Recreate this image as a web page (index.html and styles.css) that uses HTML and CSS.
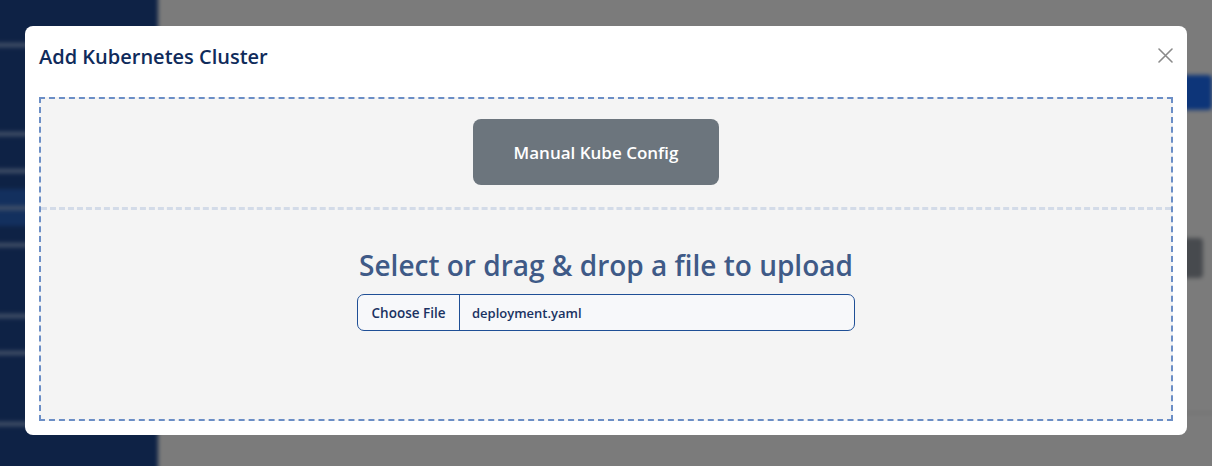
FILE: index.html
```html
<!DOCTYPE html>
<html lang="en">
<head>
<meta charset="utf-8">
<title>Add Kubernetes Cluster</title>
<link rel="stylesheet" href="styles.css">
</head>
<body>
<div class="app">
  <aside class="sidebar">
    <div class="side-logo"><span class="bar"></span></div>
    <div class="side-group">
      <div class="side-item"><span class="bar"></span></div>
      <div class="side-item"><span class="bar"></span></div>
      <div class="side-item active"><span class="bar"></span></div>
      <div class="side-item"><span class="bar"></span></div>
    </div>
    <div class="side-group">
      <div class="side-item"><span class="bar"></span></div>
      <div class="side-item"><span class="bar"></span></div>
    </div>
    <div class="side-group">
      <div class="side-item"><span class="bar"></span></div>
    </div>
  </aside>
  <main class="main">
    <div class="main-top"></div>
    <div class="main-row">
      <span class="btn-blue"></span>
    </div>
    <div class="main-row row2">
      <span class="btn-dark"></span>
    </div>
    <div class="main-line"></div>
  </main>
</div>

<div class="overlay">
  <div class="modal">
    <div class="modal-header">
      <h2 class="modal-title">Add Kubernetes Cluster</h2>
      <button class="close-btn" aria-label="Close">
        <svg width="15" height="15" viewBox="0 0 15 15">
          <path d="M1 1 L14 14 M14 1 L1 14" stroke="#8a8a8a" stroke-width="1.6" fill="none" stroke-linecap="round"/>
        </svg>
      </button>
    </div>
    <div class="dropzone">
      <div class="zone-top">
        <button class="btn-manual">Manual Kube Config</button>
      </div>
      <div class="zone-bottom">
        <h3 class="upload-title">Select or drag &amp; drop a file to upload</h3>
        <div class="file-input">
          <span class="file-choose">Choose File</span>
          <span class="file-name">deployment.yaml</span>
        </div>
      </div>
    </div>
  </div>
</div>
</body>
</html>
```

FILE: styles.css
```css
* { box-sizing: border-box; }

html, body {
  margin: 0;
  padding: 0;
  width: 1212px;
  height: 466px;
  overflow: hidden;
  background: #7b7b7b;
  font-family: "Open Sans", "Noto Sans", sans-serif;
}

.app {
  display: flex;
  width: 1232px;
  height: 486px;
  margin: -10px;
  filter: blur(2px);
}

.sidebar {
  width: 168px;
  flex: none;
  background: #0e2245;
  display: flex;
  flex-direction: column;
  padding-top: 38px;
}

.side-logo {
  height: 38px;
  display: flex;
  align-items: center;
  margin-bottom: 54px;
}

.side-group {
  display: flex;
  flex-direction: column;
  margin-bottom: 34px;
}

.side-item {
  height: 37px;
  display: flex;
  align-items: center;
}

.side-item.active {
  background: #13305e;
}

.bar {
  display: block;
  width: 100px;
  height: 4px;
  border-radius: 2px;
  background: #46536a;
}

.main {
  flex: 1;
  background: #7b7b7b;
  display: flex;
  flex-direction: column;
}

.main-top {
  height: 85px;
}

.main-row {
  display: flex;
  justify-content: flex-end;
  padding-right: 10px;
}

.btn-blue {
  width: 120px;
  height: 35px;
  background: #0d3579;
  border-radius: 4px;
}

.row2 {
  margin-top: 128px;
  padding-right: 19px;
}

.btn-dark {
  width: 120px;
  height: 40px;
  background: #474a4e;
  border-radius: 4px;
}

.main-line {
  margin-top: 134px;
  height: 2px;
  background: #727272;
}

.overlay {
  position: fixed;
  inset: 0;
  padding: 26px 25px;
}

.modal {
  width: 1162px;
  height: 409px;
  background: #ffffff;
  border-radius: 8px;
  padding: 0 14px 14px;
  display: flex;
  flex-direction: column;
}

.modal-header {
  display: flex;
  align-items: center;
  justify-content: space-between;
  padding-top: 14px;
  height: 48px;
  margin-bottom: 23px;
}

.modal-title {
  margin: 0;
  font-size: 20px;
  font-weight: 600;
  line-height: 34px;
  color: #0f2b5b;
}

.close-btn {
  border: 0;
  background: transparent;
  padding: 0;
  width: 15px;
  height: 15px;
  margin-top: -4px;
  margin-right: 0;
  display: flex;
}

.dropzone {
  flex: 1;
  border: 2px dashed #6b8ec6;
  background: #f4f4f4;
  display: flex;
  flex-direction: column;
}

.zone-top {
  display: flex;
  justify-content: center;
  padding: 20px 20px 22px 0;
  border-bottom: 3px dashed #d3dbe8;
}

.btn-manual {
  width: 246px;
  height: 66px;
  border: 0;
  border-radius: 8px;
  background: #6c757d;
  color: #ffffff;
  font-family: inherit;
  font-size: 17px;
  font-weight: 600;
}

.zone-bottom {
  flex: 1;
  display: flex;
  flex-direction: column;
  align-items: center;
  padding-top: 37px;
}

.upload-title {
  margin: 0;
  font-size: 28px;
  font-weight: 600;
  line-height: 36px;
  color: #3f5a87;
}

.file-input {
  margin-top: 11px;
  width: 498px;
  height: 37px;
  border: 1px solid #1f4f96;
  border-radius: 7px;
  background: #f7f8fa;
  display: flex;
  align-items: stretch;
  font-size: 13px;
  font-weight: 600;
  color: #1a3262;
}

.file-choose {
  width: 102px;
  border-right: 1px solid #1f4f96;
  display: flex;
  align-items: center;
  justify-content: center;
  font-size: 13.5px;
}

.file-name {
  display: flex;
  align-items: center;
  padding-left: 12px;
}
```
